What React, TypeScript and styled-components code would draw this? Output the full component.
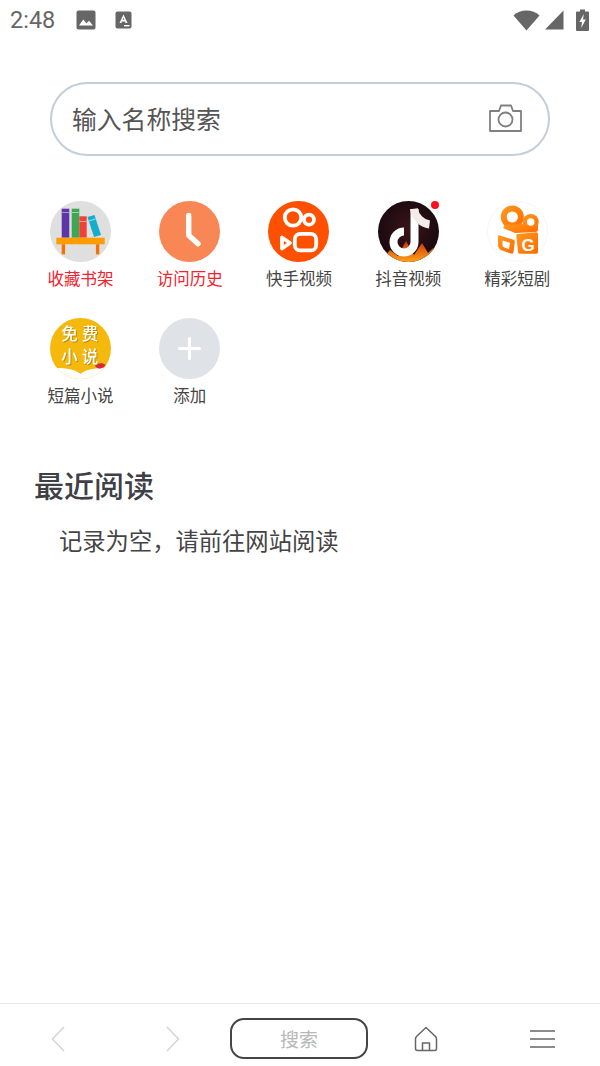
import React from 'react'
import styled, { createGlobalStyle } from 'styled-components'

const CJK = `"Noto Sans CJK SC", "Noto Sans", sans-serif`

const GlobalStyle = createGlobalStyle`
  html, body {
    margin: 0;
    padding: 0;
    background: #fff;
  }
  * {
    box-sizing: border-box;
  }
`

const Page = styled.div`
  width: 600px;
  height: 1066px;
  display: flex;
  flex-direction: column;
  overflow: hidden;
  background: #fff;
  font-family: ${CJK};
`

const StatusBar = styled.div`
  height: 40px;
  display: flex;
  align-items: center;
  padding: 0 11px 0 10px;
  color: #666;
`

const Clock = styled.span`
  font-family: Roboto, sans-serif;
  font-size: 23.5px;
  line-height: 40px;
  width: 47px;
`

const StatusLeft = styled.div`
  display: flex;
  align-items: center;
  gap: 19px;
  flex: 1;
`

const StatusRight = styled.div`
  display: flex;
  align-items: center;
  gap: 5px;
`

const Main = styled.main`
  flex: 1;
  display: flex;
  flex-direction: column;
`

const SearchBox = styled.div`
  width: 500px;
  height: 74px;
  margin: 42px auto 0;
  padding: 0 26px 2px 20px;
  display: flex;
  align-items: center;
  justify-content: space-between;
  border: 2px solid #c3ced8;
  border-radius: 37px;
`

const Placeholder = styled.span`
  font-size: 24.8px;
  line-height: 1;
  color: #555;
`

const Shortcuts = styled.div`
  margin-top: 45px;
  padding: 0 26px;
  display: grid;
  grid-template-columns: repeat(5, 109.2px);
  grid-auto-rows: 117px;
`

const Shortcut = styled.div`
  display: flex;
  flex-direction: column;
  align-items: center;
`

const IconCircle = styled.div`
  width: 61px;
  height: 61px;
  svg {
    display: block;
    overflow: visible;
  }
`

const Label = styled.span<{ $active?: boolean }>`
  margin-top: 5px;
  font-size: 16.5px;
  line-height: 22px;
  white-space: nowrap;
  color: ${({ $active }) => ($active ? '#f5222d' : '#444')};
`

const Recent = styled.section`
  margin-top: 27px;
  padding-left: 34px;
`

const RecentTitle = styled.h2`
  margin: 0;
  font-size: 30px;
  line-height: 44px;
  font-weight: 500;
  color: #3f3f46;
`

const EmptyNote = styled.p`
  margin: 17px 0 0 25px;
  font-size: 23.3px;
  line-height: 34px;
  color: #444;
`

const BottomBar = styled.nav`
  height: 63px;
  border-top: 1px solid #e8e8e8;
  display: grid;
  grid-template-columns: 115px 115px 138px 116px 116px;
  align-items: center;
  justify-items: center;
  padding-top: 7px;
`

const NavIcon = styled.div`
  display: flex;
  svg {
    display: block;
  }
`

const SearchButton = styled.div`
  width: 138px;
  height: 41px;
  border: 2px solid #444;
  border-radius: 14px;
  display: flex;
  align-items: center;
  justify-content: center;
  font-size: 19px;
  color: #b8b8b8;
`

const ImageIcon = () => (
  <svg width="20" height="20" viewBox="0 0 20 20">
    <rect x="0.5" y="0.5" width="19" height="19" rx="2" fill="#666" />
    <path d="M3 15.5 L7.2 9.5 L10.5 13.2 L13 10.8 L17 15.5 Z" fill="#fff" />
  </svg>
)

const FontIcon = () => (
  <svg width="17" height="18" viewBox="0 0 17 18">
    <rect x="0.5" y="0.5" width="16" height="17" rx="2" fill="#666" />
    <path d="M4.5 12 L8.5 3.5 L12.5 12 H10.6 L10 10.4 H7 L6.4 12 Z M7.7 8.8 H9.3 L8.5 6.6 Z" fill="#fff" fillRule="evenodd" />
    <rect x="9" y="14" width="5.5" height="1.4" fill="#fff" />
  </svg>
)

const WifiIcon = () => (
  <svg width="27" height="21" viewBox="0 0 27 21">
    <path d="M13.5 20.5 L0.5 5.5 C4 2.3 8.5 0.5 13.5 0.5 C18.5 0.5 23 2.3 26.5 5.5 Z" fill="#666" />
  </svg>
)

const SignalIcon = () => (
  <svg width="19" height="20" viewBox="0 0 19 20">
    <path d="M0 19.5 L18.5 0.5 V19.5 Z" fill="#666" />
  </svg>
)

const BatteryIcon = () => (
  <svg width="13" height="22" viewBox="0 0 13 22" style={{ marginLeft: 7 }}>
    <path d="M4 0.5 H9 V2.5 H12 A1 1 0 0 1 13 3.5 V21 A1 1 0 0 1 12 22 H1 A1 1 0 0 1 0 21 V3.5 A1 1 0 0 1 1 2.5 H4 Z" fill="#666" />
    <path d="M7.8 5 L3.4 13 H6 L5.2 19 L9.8 10.6 H7 Z" fill="#fff" />
  </svg>
)

const CameraIcon = () => (
  <svg width="33" height="28" viewBox="0 0 33 28" fill="none" stroke="#808080" strokeWidth="1.8" strokeLinejoin="round">
    <path d="M1 7 H10 L12 1.5 H22 L24 7 H32 V27 H1 Z" />
    <circle cx="16.5" cy="15.5" r="7" />
  </svg>
)

const BookshelfIcon = () => (
  <svg width="61" height="61" viewBox="0 0 61 61">
    <circle cx="30.5" cy="30.5" r="30.5" fill="#dfdfdf" />
    <rect x="11.7" y="7.7" width="7.6" height="29" fill="#5e35a8" />
    <rect x="11.7" y="11" width="7.6" height="1" fill="#a993d6" />
    <rect x="21.7" y="7.7" width="7.6" height="29" fill="#3fa652" />
    <rect x="21.7" y="11" width="7.6" height="1" fill="#9bd6a6" />
    <rect x="29.3" y="15.3" width="7.4" height="21.4" fill="#ee4238" />
    <rect x="29.3" y="20" width="7.4" height="1" fill="#f9a29c" />
    <path d="M37.5 16 L44.5 14 L51 34 L44 36 Z" fill="#12aecb" />
    <path d="M38.5 19.5 L45.5 17.5 L45.8 18.5 L38.8 20.5 Z" fill="#8adfee" />
    <rect x="6.3" y="36.7" width="48.4" height="6.6" fill="#ff9d00" />
    <rect x="11.7" y="43.3" width="3.4" height="10" fill="#f57200" />
    <rect x="45.9" y="43.3" width="3.4" height="10" fill="#f57200" />
  </svg>
)

const HistoryIcon = () => (
  <svg width="61" height="61" viewBox="0 0 61 61">
    <circle cx="30.5" cy="30.5" r="30.5" fill="#f98755" />
    <path d="M29.7 14.5 V34.3 L39 42.7" fill="none" stroke="#fff" strokeWidth="5.4" strokeLinecap="round" strokeLinejoin="round" />
  </svg>
)

const KuaishouIcon = () => (
  <svg width="61" height="61" viewBox="0 0 61 61">
    <circle cx="30.5" cy="30.5" r="30.5" fill="#ff5000" />
    <g fill="none" stroke="#fff" strokeWidth="3.8" strokeLinejoin="round">
      <circle cx="25" cy="16.5" r="8.2" />
      <circle cx="41" cy="18.7" r="5" />
      <rect x="26.8" y="32.8" width="21.4" height="16.6" rx="5.5" />
      <path d="M14 36.5 L22 42 L14 47.5 Z" />
    </g>
  </svg>
)

const DouyinIcon = () => (
  <svg width="61" height="61" viewBox="0 0 61 61">
    <defs>
      <radialGradient id="dyBg" cx="50%" cy="45%" r="60%">
        <stop offset="0%" stopColor="#3a1418" />
        <stop offset="100%" stopColor="#14080e" />
      </radialGradient>
      <linearGradient id="dyFlame" x1="0" y1="0" x2="0" y2="1">
        <stop offset="0%" stopColor="#c8320c" />
        <stop offset="100%" stopColor="#ffa21a" />
      </linearGradient>
      <clipPath id="dyClip">
        <circle cx="30.5" cy="30.5" r="30.5" />
      </clipPath>
    </defs>
    <circle cx="30.5" cy="30.5" r="30.5" fill="url(#dyBg)" />
    <g clipPath="url(#dyClip)">
      <path d="M0 61 V50 L8 54 L12 49 L20 55 L28 40 L36 54 L44 42 L50 52 L54 48 L61 44 V61 Z" fill="url(#dyFlame)" />
      <path d="M36.5 8 V41 A10.5 10.5 0 1 1 26 30.5" fill="none" stroke="#fff" strokeWidth="8" />
      <path d="M36 7.7 C37 16 44 22.5 51.5 23.5" fill="none" stroke="#f4ece8" strokeWidth="8" />
    </g>
    <circle cx="57" cy="4" r="4" fill="#f5111d" />
  </svg>
)

const DramaIcon = () => (
  <svg width="61" height="61" viewBox="0 0 61 61">
    <defs>
      <linearGradient id="dramaFill" x1="0" y1="0" x2="1" y2="1">
        <stop offset="0%" stopColor="#ff9a1f" />
        <stop offset="100%" stopColor="#ff6a00" />
      </linearGradient>
    </defs>
    <circle cx="30.5" cy="30.5" r="30" fill="#fff" stroke="#f6f6f6" />
    <g fill="url(#dramaFill)">
      <circle cx="25.3" cy="16" r="11.5" />
      <circle cx="43.7" cy="21" r="8" />
      <path d="M18 24 L51 22 V29 C51 30 50 31 48 31 L28 32 L16 27 Z" />
      <path d="M12 34.3 L26.5 38.8 C27.5 39 27.9 40 27.8 41 L26.5 51 C26.3 52.5 25.5 53 24 52.6 L15 49.5 C12.5 48.5 11 46.5 11 44 V35.3 C11 34.5 11.4 34.2 12 34.3 Z" />
      <path d="M29.3 34.5 C29.3 33.5 30 33 31 33 L49 31.3 C50.3 31.2 51 32 51 33 V50.5 C51 52 50.3 52.7 49 52.7 L33 52.7 C31.7 52.7 31 52 31 50.5 Z" />
    </g>
    <circle cx="25.3" cy="16" r="5.6" fill="#fff" />
    <circle cx="43.7" cy="21" r="3.8" fill="#fff" />
    <path d="M15.5 39.5 L23 41.8 L22 48.2 L17.5 46.6 C16.2 46.1 15.5 45 15.5 44 Z" fill="#fff" />
    <text x="41" y="49.5" textAnchor="middle" fontFamily="'Liberation Sans', sans-serif" fontWeight="700" fontSize="17" fill="#fff">G</text>
  </svg>
)

const NovelIcon = () => (
  <svg width="61" height="61" viewBox="0 0 61 61">
    <defs>
      <clipPath id="novelClip">
        <circle cx="30.5" cy="30.5" r="30.5" />
      </clipPath>
    </defs>
    <circle cx="30.5" cy="30.5" r="30.5" fill="#f5b80c" />
    <g clipPath="url(#novelClip)">
      <path d="M0 50 C12 50 24 50 30.5 56 C37 50 49 50 61 50 V61 H0 Z" fill="#fff" />
    </g>
    <path d="M45 48 C48.5 44.5 53 44.5 55.5 47 C53 51 48.5 52 45 48 Z" fill="#d9263a" />
    <g fontFamily={CJK} fontWeight="500" fontSize="16.5" fill="#fff" textAnchor="middle" style={{ filter: 'drop-shadow(1px 1px 0 rgba(150,100,0,0.55))' }}>
      <text x="19.5" y="22">免</text>
      <text x="40" y="22">费</text>
      <text x="19.5" y="45">小</text>
      <text x="40" y="45">说</text>
    </g>
  </svg>
)

const AddIcon = () => (
  <svg width="61" height="61" viewBox="0 0 61 61">
    <circle cx="30.5" cy="30.5" r="30.5" fill="#dfe2e6" />
    <path d="M20.5 30.5 H40.5 M30.5 20.5 V40.5" stroke="#fff" strokeWidth="3" strokeLinecap="round" />
  </svg>
)

const shortcuts = [
  { label: '收藏书架', icon: <BookshelfIcon />, active: true },
  { label: '访问历史', icon: <HistoryIcon />, active: true },
  { label: '快手视频', icon: <KuaishouIcon /> },
  { label: '抖音视频', icon: <DouyinIcon /> },
  { label: '精彩短剧', icon: <DramaIcon /> },
  { label: '短篇小说', icon: <NovelIcon /> },
  { label: '添加', icon: <AddIcon /> },
]

const App = () => (
  <Page>
    <GlobalStyle />
    <StatusBar>
      <StatusLeft>
        <Clock>2:48</Clock>
        <ImageIcon />
        <FontIcon />
      </StatusLeft>
      <StatusRight>
        <WifiIcon />
        <SignalIcon />
        <BatteryIcon />
      </StatusRight>
    </StatusBar>

    <Main>
      <SearchBox>
        <Placeholder>输入名称搜索</Placeholder>
        <CameraIcon />
      </SearchBox>

      <Shortcuts>
        {shortcuts.map((s) => (
          <Shortcut key={s.label}>
            <IconCircle>{s.icon}</IconCircle>
            <Label $active={s.active}>{s.label}</Label>
          </Shortcut>
        ))}
      </Shortcuts>

      <Recent>
        <RecentTitle>最近阅读</RecentTitle>
        <EmptyNote>记录为空，请前往网站阅读</EmptyNote>
      </Recent>
    </Main>

    <BottomBar>
      <NavIcon>
        <svg width="14" height="26" viewBox="0 0 14 26" fill="none" stroke="#d4d4d4" strokeWidth="1.5">
          <path d="M13 1 L1.5 13 L13 25" />
        </svg>
      </NavIcon>
      <NavIcon>
        <svg width="14" height="26" viewBox="0 0 14 26" fill="none" stroke="#d4d4d4" strokeWidth="1.5">
          <path d="M1 1 L12.5 13 L1 25" />
        </svg>
      </NavIcon>
      <SearchButton>搜索</SearchButton>
      <NavIcon>
        <svg width="24" height="26" viewBox="0 0 24 26" fill="none" stroke="#666" strokeWidth="1.5" strokeLinejoin="round">
          <path d="M12 1.5 L2.5 10.5 C1.8 11.2 1.5 12 1.5 13 V22.5 C1.5 23.8 2.2 24.5 3.5 24.5 H20.5 C21.8 24.5 22.5 23.8 22.5 22.5 V13 C22.5 12 22.2 11.2 21.5 10.5 Z" />
          <path d="M8.5 24.5 V17 H15.5 V24.5" />
        </svg>
      </NavIcon>
      <NavIcon>
        <svg width="25" height="18" viewBox="0 0 25 18" stroke="#666" strokeWidth="1.6">
          <path d="M0 1 H25 M0 9 H25 M0 17 H25" />
        </svg>
      </NavIcon>
    </BottomBar>
  </Page>
)

export default App
